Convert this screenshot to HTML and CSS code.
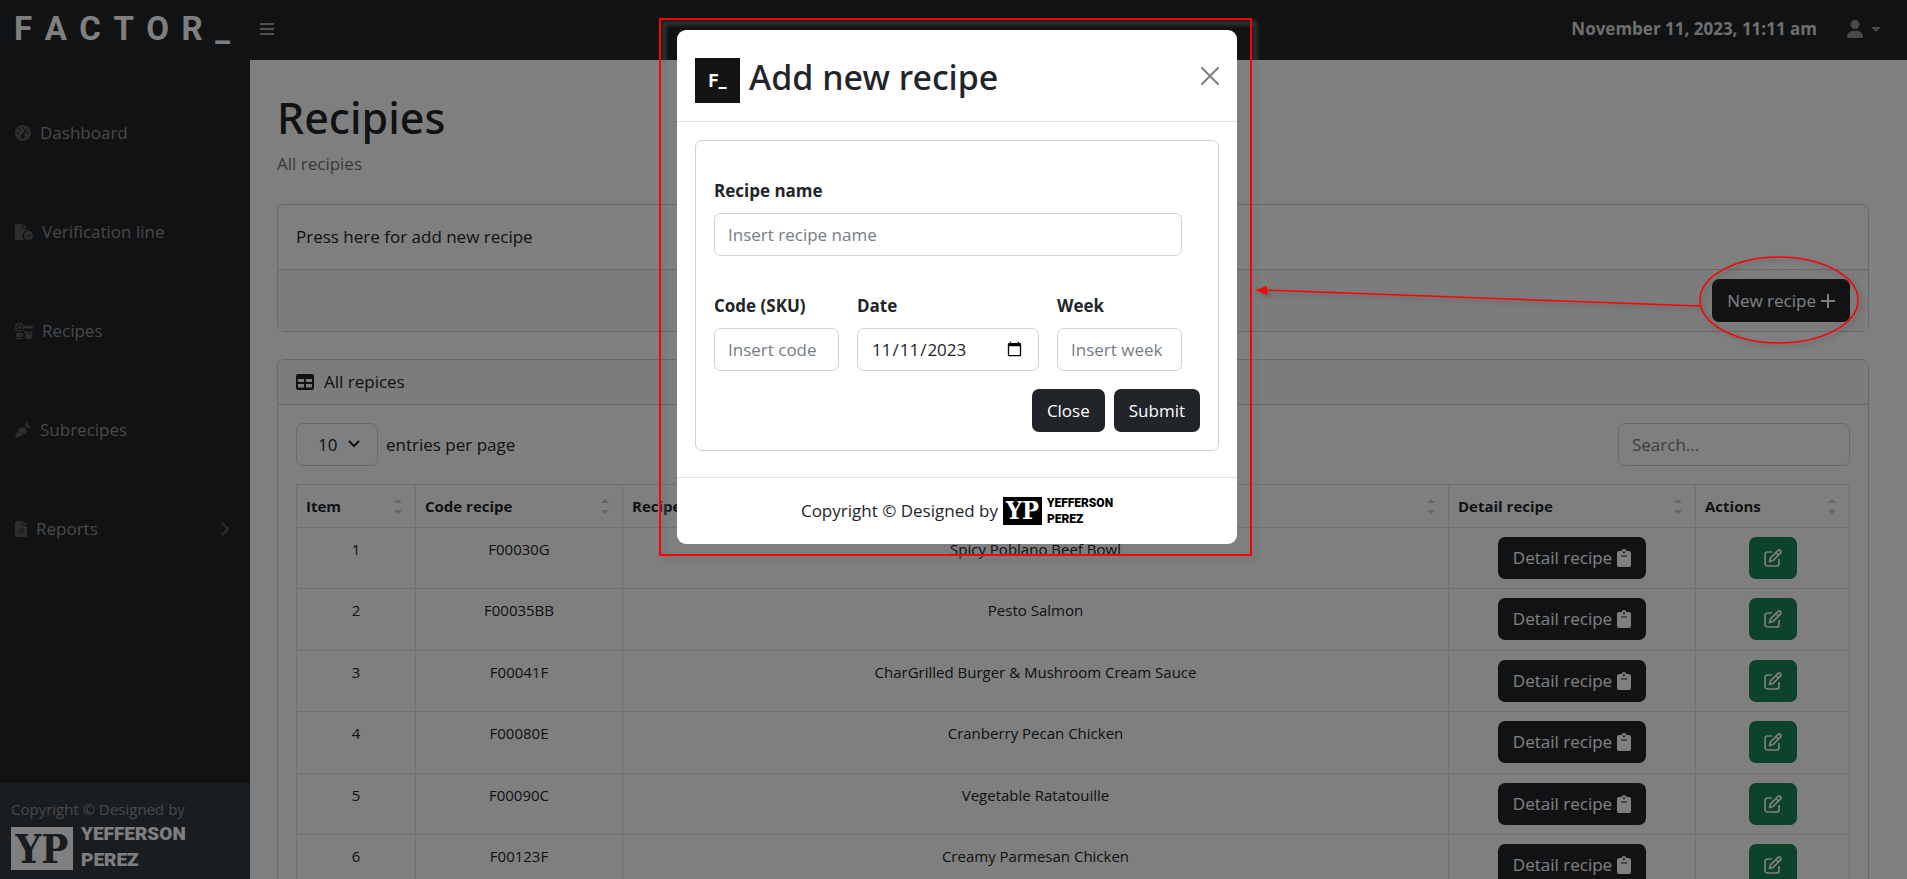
FILE: index.html
```html
<!DOCTYPE html>
<html lang="en">
<head>
<meta charset="utf-8">
<title>Recipies</title>
<link rel="stylesheet" href="styles.css">
</head>
<body>
<svg class="defs" aria-hidden="true">
  <symbol id="i-gauge" viewBox="0 0 16 16"><path fill-rule="evenodd" d="M8 0a8 8 0 1 1 0 16A8 8 0 0 1 8 0zm0 2a1 1 0 1 0 0 2 1 1 0 0 0 0-2zM4.500 3.500a1 1 0 1 0 0 2 1 1 0 0 0 0-2zM3 7a1 1 0 1 0 0 2 1 1 0 0 0 0-2zm10 0a1 1 0 1 0 0 2 1 1 0 0 0 0-2zm-1.900-3.200a.8.800 0 0 0-1 .4L7.700 9.500A2 2 0 1 0 9.200 10.100l2.400-5.300a.8.800 0 0 0-.5-1z"/></symbol>
  <symbol id="i-filecheck" viewBox="0 0 18 16"><path fill-rule="evenodd" d="M2 0h5v4a1 1 0 0 0 1 1h4v1.300A5.500 5.500 0 0 0 9.500 16H2a2 2 0 0 1-2-2V2a2 2 0 0 1 2-2zm6 0l4 4H8zm5.500 7a4.500 4.500 0 1 1 0 9 4.500 4.500 0 0 1 0-9zm1.700 2.800L13 12l-1-1-.8.8 1.800 1.800 3-3z"/></symbol>
  <symbol id="i-kitchen" viewBox="0 0 18 16"><path fill-rule="evenodd" d="M4.500 0a4.500 4.500 0 0 1 4.300 3h2.500l.7-.5h4.500a1.200 1.200 0 0 1 0 3H12l-.7-.5H8.800A4.500 4.500 0 1 1 4.500 0zm0 1.500a3 3 0 1 0 0 6 3 3 0 0 0 0-6zm0 1.200a1.800 1.800 0 1 1 0 3.600 1.800 1.800 0 0 1 0-3.600zM1 10h7v2.500a1.500 1.500 0 0 1-1.500 1.500h-4A1.500 1.500 0 0 1 1 12.500zm4.500 1v1.500h1.200V11zM0 14.800h8V16H0zM9 8.500h9v1.200H9zM10 10.500h7V14a2 2 0 0 1-2 2h-3a2 2 0 0 1-2-2z"/></symbol>
  <symbol id="i-carrot" viewBox="0 0 16 16"><path d="M9.600 5.800c1.800.9 2.500 3 1.600 4.700-.5.900-1.200 1.400-2 1.800L7.500 10.600l-.7.7 1.500 1.500L.9 16c-.6.200-1.100-.3-.9-.9l2.600-5.800 2 2 .7-.7-2.300-2.300C4 5.600 7 4.500 9.600 5.800zM10.400 5.600C9.500 3.700 10 1.800 12 0c1 1.200 1.200 2.400.9 3.600 1.200-.4 2.200 0 3.100 1-1.700 1.900-3.700 2.200-5.600 1z"/></symbol>
  <symbol id="i-file" viewBox="0 0 12 16"><path fill-rule="evenodd" d="M2 0h5v4a1 1 0 0 0 1 1h4v9a2 2 0 0 1-2 2H2a2 2 0 0 1-2-2V2a2 2 0 0 1 2-2zm6 0l4 4H8zM3 7.700v.9h6v-.9zm0 2v.9h6v-.9zm0 2v.9h6v-.9z"/></symbol>
  <symbol id="i-table" viewBox="0 0 18 16"><path fill-rule="evenodd" d="M2 0h14a2 2 0 0 1 2 2v12a2 2 0 0 1-2 2H2a2 2 0 0 1-2-2V2a2 2 0 0 1 2-2zm0 5v3h6V5zm8 0v3h6V5zM2 10v3.500h6V10zm8 0v3.500h6V10z"/></symbol>
  <symbol id="i-clip" viewBox="0 0 14 18"><path fill-rule="evenodd" d="M7 0a2.700 2.700 0 0 1 2.500 2H12a2 2 0 0 1 2 2v12a2 2 0 0 1-2 2H2a2 2 0 0 1-2-2V4a2 2 0 0 1 2-2h2.500A2.700 2.700 0 0 1 7 0zm0 2.200a1 1 0 1 0 0 2 1 1 0 0 0 0-2zM4 6.500v1h6v-1z"/></symbol>
  <symbol id="i-edit" viewBox="0 0 18 18"><g fill="none" stroke="currentColor" stroke-width="1.700"><path d="M8 3H3.500A2.500 2.500 0 0 0 1 5.500v9A2.500 2.500 0 0 0 3.500 17h9a2.500 2.500 0 0 0 2.500-2.500V10"/><path d="M5.600 12.400l.9-3.500 7.400-7.300a1.600 1.600 0 0 1 2.500 2.500L9 11.500zM12 3.500L14.500 6"/></g></symbol>
  <symbol id="i-user" viewBox="0 0 16 18"><path d="M8 0a4.500 4.500 0 1 1 0 9 4.500 4.500 0 0 1 0-9zM6.300 10.700h3.400A6.300 6.300 0 0 1 16 17c0 .6-.4 1-1 1H1c-.6 0-1-.4-1-1a6.300 6.300 0 0 1 6.300-6.300z"/></symbol>
</svg>

<header class="topbar">
  <a class="brand" href="#" aria-label="FACTOR_"><span>F</span><span>A</span><span>C</span><span>T</span><span>O</span><span>R</span><span>_</span></a>
  <button class="toggle" type="button" aria-label="Toggle navigation"><svg width="14" height="12" viewBox="0 0 14 12"><path d="M0 0h14v2H0zM0 5h14v2H0zM0 10h14v2H0z"/></svg></button>
  <strong class="clock">November 11, 2023, 11:11 am</strong>
  <button class="account" type="button" aria-label="Account"><svg width="16" height="18"><use href="#i-user"/></svg><svg width="10" height="5" viewBox="0 0 10 5"><path d="M0 0h10L5 5z"/></svg></button>
</header>

<div class="shell">
  <aside class="sidebar">
    <nav class="menu">
      <a href="#"><svg width="16" height="16"><use href="#i-gauge"/></svg>Dashboard</a>
      <a href="#"><svg width="18" height="16"><use href="#i-filecheck"/></svg>Verification line</a>
      <a href="#"><svg width="18" height="16"><use href="#i-kitchen"/></svg>Recipes</a>
      <a href="#"><svg width="16" height="16"><use href="#i-carrot"/></svg>Subrecipes</a>
      <a href="#"><svg width="12" height="16"><use href="#i-file"/></svg>Reports<svg class="more" width="10" height="14" viewBox="0 0 10 14"><path d="M2 1l6 6-6 6" fill="none" stroke="currentColor" stroke-width="2"/></svg></a>
    </nav>
    <div class="credit">
      <div>Copyright © Designed by</div>
      <div class="yp yp-large"><span class="yp-box">YP</span><span class="yp-name"><span>YEFFERSON</span><span>PEREZ</span></span></div>
    </div>
  </aside>

  <main class="main">
    <h1>Recipies</h1>
    <p class="sub">All recipies</p>
    <section class="card add-card">
      <div class="add-text">Press here for add new recipe</div>
      <div class="add-foot">
        <button class="btn" type="button">New recipe <svg width="14" height="14" viewBox="0 0 14 14"><path d="M7 0v14M0 7h14" stroke="currentColor" stroke-width="2"/></svg></button>
      </div>
    </section>
    <section class="card">
      <div class="card-head"><svg width="18" height="16"><use href="#i-table"/></svg>All repices</div>
      <div class="card-body">
        <div class="tools">
          <label class="per-page"><span class="select-wrap"><select><option>10</option><option>25</option></select><svg width="12" height="8" viewBox="0 0 12 8"><path d="M1 1l5 5 5-5" fill="none" stroke="currentColor" stroke-width="2"/></svg></span>entries per page</label>
          <input class="field search" type="search" placeholder="Search..." aria-label="Search">
        </div>
        <table>
          <colgroup><col class="c1"><col class="c2"><col class="c3"><col class="c4"><col class="c5"></colgroup>
          <thead><tr>
            <th>Item<i class="sort"></i></th><th>Code recipe<i class="sort"></i></th><th>Recipe name<i class="sort"></i></th><th>Detail recipe<i class="sort"></i></th><th>Actions<i class="sort"></i></th>
          </tr></thead>
          <tbody>
            <tr><td>1</td><td>F00030G</td><td>Spicy Poblano Beef Bowl</td><td><button class="btn" type="button">Detail recipe <svg width="14" height="18"><use href="#i-clip"/></svg></button></td><td><button class="btn edit" type="button" aria-label="Edit"><svg width="18" height="18"><use href="#i-edit"/></svg></button></td></tr>
            <tr><td>2</td><td>F00035BB</td><td>Pesto Salmon</td><td><button class="btn" type="button">Detail recipe <svg width="14" height="18"><use href="#i-clip"/></svg></button></td><td><button class="btn edit" type="button" aria-label="Edit"><svg width="18" height="18"><use href="#i-edit"/></svg></button></td></tr>
            <tr><td>3</td><td>F00041F</td><td>CharGrilled Burger &amp; Mushroom Cream Sauce</td><td><button class="btn" type="button">Detail recipe <svg width="14" height="18"><use href="#i-clip"/></svg></button></td><td><button class="btn edit" type="button" aria-label="Edit"><svg width="18" height="18"><use href="#i-edit"/></svg></button></td></tr>
            <tr><td>4</td><td>F00080E</td><td>Cranberry Pecan Chicken</td><td><button class="btn" type="button">Detail recipe <svg width="14" height="18"><use href="#i-clip"/></svg></button></td><td><button class="btn edit" type="button" aria-label="Edit"><svg width="18" height="18"><use href="#i-edit"/></svg></button></td></tr>
            <tr><td>5</td><td>F00090C</td><td>Vegetable Ratatouille</td><td><button class="btn" type="button">Detail recipe <svg width="14" height="18"><use href="#i-clip"/></svg></button></td><td><button class="btn edit" type="button" aria-label="Edit"><svg width="18" height="18"><use href="#i-edit"/></svg></button></td></tr>
            <tr><td>6</td><td>F00123F</td><td>Creamy Parmesan Chicken</td><td><button class="btn" type="button">Detail recipe <svg width="14" height="18"><use href="#i-clip"/></svg></button></td><td><button class="btn edit" type="button" aria-label="Edit"><svg width="18" height="18"><use href="#i-edit"/></svg></button></td></tr>
          </tbody>
        </table>
      </div>
    </section>
  </main>
</div>

<div class="backdrop">
  <div class="dialog" role="dialog" aria-labelledby="dlg-title">
    <div class="dlg-head">
      <span class="mark">F_</span>
      <h2 id="dlg-title">Add new recipe</h2>
      <button class="close" type="button" aria-label="Close dialog"><svg width="18" height="18" viewBox="0 0 18 18"><path d="M1 1l16 16M17 1L1 17" stroke="currentColor" stroke-width="2" stroke-linecap="round"/></svg></button>
    </div>
    <div class="dlg-body">
      <form class="card form">
        <div class="form-grid">
          <div class="group wide"><label for="f-name">Recipe name</label><input class="field" id="f-name" type="text" placeholder="Insert recipe name"></div>
          <div class="group"><label for="f-code">Code (SKU)</label><input class="field" id="f-code" type="text" placeholder="Insert code"></div>
          <div class="group"><label for="f-date">Date</label><input class="field" id="f-date" type="date" value="2023-11-11"></div>
          <div class="group"><label for="f-week">Week</label><input class="field" id="f-week" type="text" placeholder="Insert week"></div>
        </div>
        <div class="form-actions"><button class="btn" type="button">Close</button><button class="btn" type="submit">Submit</button></div>
      </form>
    </div>
    <div class="dlg-foot">Copyright © Designed by <div class="yp"><span class="yp-box">YP</span><span class="yp-name"><span>YEFFERSON</span><span>PEREZ</span></span></div></div>
    <div class="frame"></div>
  </div>
</div>
<svg class="arrow" width="610" height="100" viewBox="0 0 610 100"><g fill="none" stroke="#f00" stroke-width="1.500"><ellipse cx="529" cy="50" rx="79" ry="43"/><path d="M450 56L14 40"/></g><path d="M5 40l12-4v9z" fill="#f00"/></svg>
</body>
</html>
```
FILE: styles.css
```css
* { box-sizing: border-box; }
body {
  margin: 0;
  height: 100vh;
  overflow: hidden;
  position: relative;
  display: flex;
  flex-direction: column;
  background: #fff;
  color: #212529;
  font: 17px/26px "Open Sans", "Noto Sans", sans-serif;
}
button, input, select { font: inherit; color: inherit; }
svg { fill: currentColor; flex: none; }
.defs { position: absolute; width: 0; height: 0; }

.topbar {
  flex: none;
  height: 60px;
  display: flex;
  align-items: center;
  padding: 0 26px 2px 14px;
  background: #212529;
  color: #fff;
}
.brand {
  display: flex;
  justify-content: space-between;
  width: 216px;
  color: #fff;
  text-decoration: none;
  font: 700 33px/40px Roboto, sans-serif;
}
.toggle, .account, .close { border: 0; padding: 0; background: none; display: flex; align-items: center; }
.toggle { margin-left: 30px; color: #a0a2a4; }
.clock { margin-left: auto; color: #dcdddd; }
.account { margin-left: 30px; gap: 8px; color: #909294; }

.shell { flex: 1; min-height: 0; display: flex; }
.sidebar {
  flex: none;
  width: 250px;
  display: flex;
  flex-direction: column;
  justify-content: space-between;
  background: #212529;
  color: #909294;
}
.menu { display: flex; flex-direction: column; padding-top: 23px; }
.menu a {
  display: flex;
  align-items: center;
  gap: 9px;
  height: 99px;
  padding: 0 20px 0 15px;
  color: #909294;
  text-decoration: none;
}
.menu svg { color: #595c5f; }
.menu .more { margin-left: auto; }
.credit { height: 96px; padding: 14px 11px; background: #343a40; font-size: 15px; line-height: 24px; }

.yp { display: flex; align-items: center; gap: 5px; color: #000; }
.yp-box {
  display: flex;
  align-items: center;
  justify-content: center;
  width: 39px;
  height: 28px;
  background: #000;
  color: #fff;
  font: 700 25px/28px "DejaVu Serif Condensed", "DejaVu Serif", serif;
}
.yp-name { display: flex; flex-direction: column; font: 900 12px/16px Roboto, sans-serif; }
.yp-large { gap: 8px; color: #fff; }
.yp-large .yp-box { width: 62px; height: 43px; margin-top: 2px; background: #fff; color: #343a40; font-size: 40px; line-height: 43px; }
.yp-large .yp-name { font-size: 19px; line-height: 26px; }

.main { flex: 1; min-width: 0; padding: 27px 38px 0 27px; }
h1 { margin: 0; font: 500 43px/62px "Noto Sans", sans-serif; }
.sub { margin: 2px 0 27px; color: #6c757d; }
.card { border: 1px solid #d0d1d2; border-radius: 7px; background: #fff; }
.add-card { margin-bottom: 27px; }
.add-text { padding: 19px 18px; }
.add-foot { display: flex; justify-content: flex-end; padding: 9px 18px; border-top: 1px solid #d0d1d2; background: #f8f8f9; }
.btn {
  display: inline-flex;
  align-items: center;
  gap: 5px;
  min-height: 43px;
  padding: 0 15px;
  border: 0;
  border-radius: 7px;
  background: #212529;
  color: #fff;
}
.edit { background: #198754; }
.card-head { display: flex; align-items: center; gap: 10px; padding: 9px 18px; border-bottom: 1px solid #d0d1d2; background: #f8f8f9; border-radius: 7px 7px 0 0; }
.card-body { padding: 18px; }
.tools { display: flex; justify-content: space-between; margin-bottom: 18px; }
.field { width: 100%; height: 43px; padding: 0 13px; border: 1px solid #ced4da; border-radius: 7px; background: #fff; outline: 0; }
.field::placeholder { color: #757d85; opacity: 1; }
.search { width: 232px; }
.per-page { display: flex; align-items: center; gap: 8px; }
.select-wrap { position: relative; width: 82px; }
.select-wrap select { width: 100%; height: 43px; padding: 0 0 0 21px; border: 1px solid #ced4da; border-radius: 7px; background: #fff; appearance: none; }
.select-wrap svg { position: absolute; right: 18px; top: 17px; pointer-events: none; }

table { width: 100%; border-collapse: collapse; table-layout: fixed; font-size: 15px; line-height: 24px; }
.c1 { width: 119px; }
.c2 { width: 207px; }
.c4 { width: 247px; }
.c5 { width: 154px; }
th, td { border: 1px solid #dee2e6; vertical-align: top; }
th { height: 43px; padding: 9px; position: relative; text-align: left; }
td { height: 61px; padding: 9px; text-align: center; }
tr:nth-child(even) td { height: 62px; }
td .btn { font-size: 17px; min-height: 42px; vertical-align: top; }
.sort { position: absolute; right: 13px; top: 14px; width: 8px; height: 15px; display: flex; flex-direction: column; justify-content: space-between; }
.sort::before, .sort::after { content: ""; border: 4px solid transparent; border-top-width: 0; border-bottom-color: #cdcdcd; }
.sort::after { border-top: 4px solid #cdcdcd; border-bottom-width: 0; }

.backdrop { position: absolute; inset: 0; display: flex; justify-content: center; align-items: flex-start; padding-top: 30px; padding-left: 7px; background: rgba(0, 0, 0, .5); }
.dialog { position: relative; width: 560px; border-radius: 9px; background: #fff; }
.dlg-head { display: flex; align-items: center; gap: 9px; height: 92px; padding: 0 18px; border-bottom: 1px solid #dee2e6; }
.mark { width: 45px; height: 45px; margin-top: 10px; background: #141414; color: #fff; font: 700 18px/45px Roboto, sans-serif; text-align: center; }
h2 { margin: 2px 0 0; font: 500 34px/48px "Noto Sans", sans-serif; }
.close { margin-left: auto; color: #7f7f7f; }
.dlg-body { padding: 18px 18px 26px; }
.form { padding: 37px 18px 18px; }
.form-grid { display: grid; grid-template-columns: 125fr 182fr 125fr; gap: 37px 18px; margin-right: 18px; }
.group { display: flex; flex-direction: column; gap: 9px; min-width: 0; }
.group label { font-weight: 700; }
.wide { grid-column: 1 / -1; }
.form-actions { display: flex; justify-content: flex-end; gap: 9px; margin-top: 18px; }
.dlg-foot { display: flex; align-items: center; justify-content: center; gap: 5px; height: 67px; border-top: 1px solid #dee2e6; }
.frame { position: absolute; inset: -12px -15px -12px -18px; border: 2px solid #f00; filter: drop-shadow(4px 4px 2px rgba(112, 112, 112, .8)); pointer-events: none; }
.arrow { position: absolute; right: 47px; top: 250px; filter: drop-shadow(3px 3px 2px rgba(80, 80, 80, .6)); pointer-events: none; }
```
